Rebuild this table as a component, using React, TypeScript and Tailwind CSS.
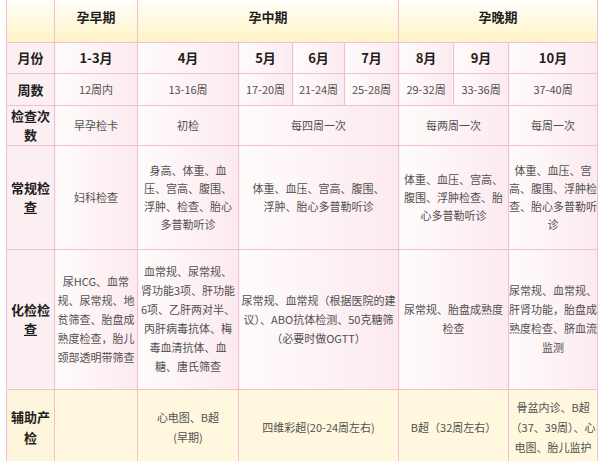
import React from "react";

const F = { fontFamily: '"Noto Sans CJK SC", "Noto Sans", sans-serif' };

const base =
  "border border-[#f0bfd5] text-center align-middle text-[11px] text-[#505050] bg-gradient-to-r from-[#fffbfb] to-[#fbeaef] px-0 whitespace-nowrap";
const cell = base + " leading-[19px]";
const cell18 = base + " leading-[18px]";
const head =
  "border border-[#f0bfd5] text-center align-middle text-[13px] font-bold text-[#1e1e1e] bg-gradient-to-r from-[#fffbfb] to-[#fbeaef] whitespace-nowrap";
const label =
  "border border-[#f0bfd5] text-center align-middle text-[13px] leading-[19px] font-bold text-[#1e1e1e] bg-[#fbeff2] px-0 whitespace-nowrap";
const top =
  "border border-[#f0bfd5] border-t-0 text-center align-middle text-[13px] font-bold text-[#1e1e1e] bg-gradient-to-b from-[#fffefa] to-[#fff3c4] pb-[8px]";
const yel =
  "border border-[#f0bfd5] text-center align-middle text-[11px] leading-[20px] text-[#505050] bg-[#fff8df] px-0 whitespace-nowrap";
const yelLabel =
  "border border-[#f0bfd5] text-center align-middle text-[13px] leading-[21px] font-bold text-[#1e1e1e] bg-[#fdf4dc] whitespace-nowrap";

export default function App() {
  return (
    <div className="w-[601px] h-[461px] overflow-hidden bg-white" style={F}>
      <table className="table-fixed border-collapse ml-[6px] w-[591px]">
        <colgroup>
          <col className="w-[48px]" />
          <col className="w-[83px]" />
          <col className="w-[101px]" />
          <col className="w-[54px]" />
          <col className="w-[52px]" />
          <col className="w-[54px]" />
          <col className="w-[55px]" />
          <col className="w-[55px]" />
          <col className="w-[89px]" />
        </colgroup>
        <tbody>
          <tr className="h-[42px]">
            <td className={top}></td>
            <td className={top}>孕早期</td>
            <td className={top} colSpan={4}>孕中期</td>
            <td className={top} colSpan={3}>孕晚期</td>
          </tr>
          <tr className="h-[31px]">
            <td className={label}>月份</td>
            <td className={head}>1-3月</td>
            <td className={head}>4月</td>
            <td className={head}>5月</td>
            <td className={head}>6月</td>
            <td className={head}>7月</td>
            <td className={head}>8月</td>
            <td className={head}>9月</td>
            <td className={head}>10月</td>
          </tr>
          <tr className="h-[32px]">
            <td className={label}>周数</td>
            <td className={cell}>12周内</td>
            <td className={cell}>13-16周</td>
            <td className={cell}>17-20周</td>
            <td className={cell}>21-24周</td>
            <td className={cell}>25-28周</td>
            <td className={cell}>29-32周</td>
            <td className={cell}>33-36周</td>
            <td className={cell}>37-40周</td>
          </tr>
          <tr className="h-[40px]">
            <td className={label}>
              检查次
              <br />数
            </td>
            <td className={cell}>早孕检卡</td>
            <td className={cell}>初检</td>
            <td className={cell} colSpan={3}>每四周一次</td>
            <td className={cell} colSpan={2}>每两周一次</td>
            <td className={cell}>每周一次</td>
          </tr>
          <tr className="h-[104px]">
            <td className={label}>
              常规检
              <br />
              <span className="underline">查</span>
            </td>
            <td className={cell18}>妇科检查</td>
            <td className={cell18}>
              身高、体重、血
              <br />
              压、宫高、腹围、
              <br />
              浮肿、检查、胎心
              <br />
              多普勒听诊
            </td>
            <td className={cell18} colSpan={3}>
              体重、血压、宫高、腹围、
              <br />
              浮肿、胎心多普勒听诊
            </td>
            <td className={cell18} colSpan={2}>
              体重、血压、宫高、
              <br />
              腹围、浮肿检查、胎
              <br />
              心多普勒听诊
            </td>
            <td className={cell18}>
              体重、血压、宫
              <br />
              高、腹围、浮肿检
              <br />
              查、胎心多普勒听
              <br />诊
            </td>
          </tr>
          <tr className="h-[140px]">
            <td className={label}>
              化检检
              <br />
              <span className="underline">查</span>
            </td>
            <td className={cell}>
              尿HCG、血常
              <br />
              规、尿常规、地
              <br />
              贫筛查、胎盘成
              <br />
              熟度检查，胎儿
              <br />
              颈部透明带筛查
            </td>
            <td className={cell}>
              血常规、尿常规、
              <br />
              肾功能3项、肝功能
              <br />
              6项、乙肝两对半、
              <br />
              丙肝病毒抗体、梅
              <br />
              毒血清抗体、血
              <br />
              糖、唐氏筛查
            </td>
            <td className={cell} colSpan={3}>
              尿常规、血常规（根据医院的建
              <br />
              议）、ABO抗体检测、50克糖筛
              <br />
              （必要时做OGTT）
            </td>
            <td className={cell} colSpan={2}>
              尿常规、胎盘成熟度
              <br />
              检查
            </td>
            <td className={cell}>
              尿常规、血常规、
              <br />
              肝肾功能，胎盘成
              <br />
              熟度检查、脐血流
              <br />
              监测
            </td>
          </tr>
          <tr className="h-[75px]">
            <td className={yelLabel}>
              辅助产
              <br />检
            </td>
            <td className={yel}></td>
            <td className={yel}>
              心电图、B超
              <br />
              (早期)
            </td>
            <td className={yel} colSpan={3}>
              四维彩超(20-24周左右)
            </td>
            <td className={yel} colSpan={2}>
              B超（32周左右）
            </td>
            <td className={yel}>
              骨盆内诊、B超
              <br />
              （37、39周）、心
              <br />
              电图、胎儿监护
            </td>
          </tr>
        </tbody>
      </table>
    </div>
  );
}
